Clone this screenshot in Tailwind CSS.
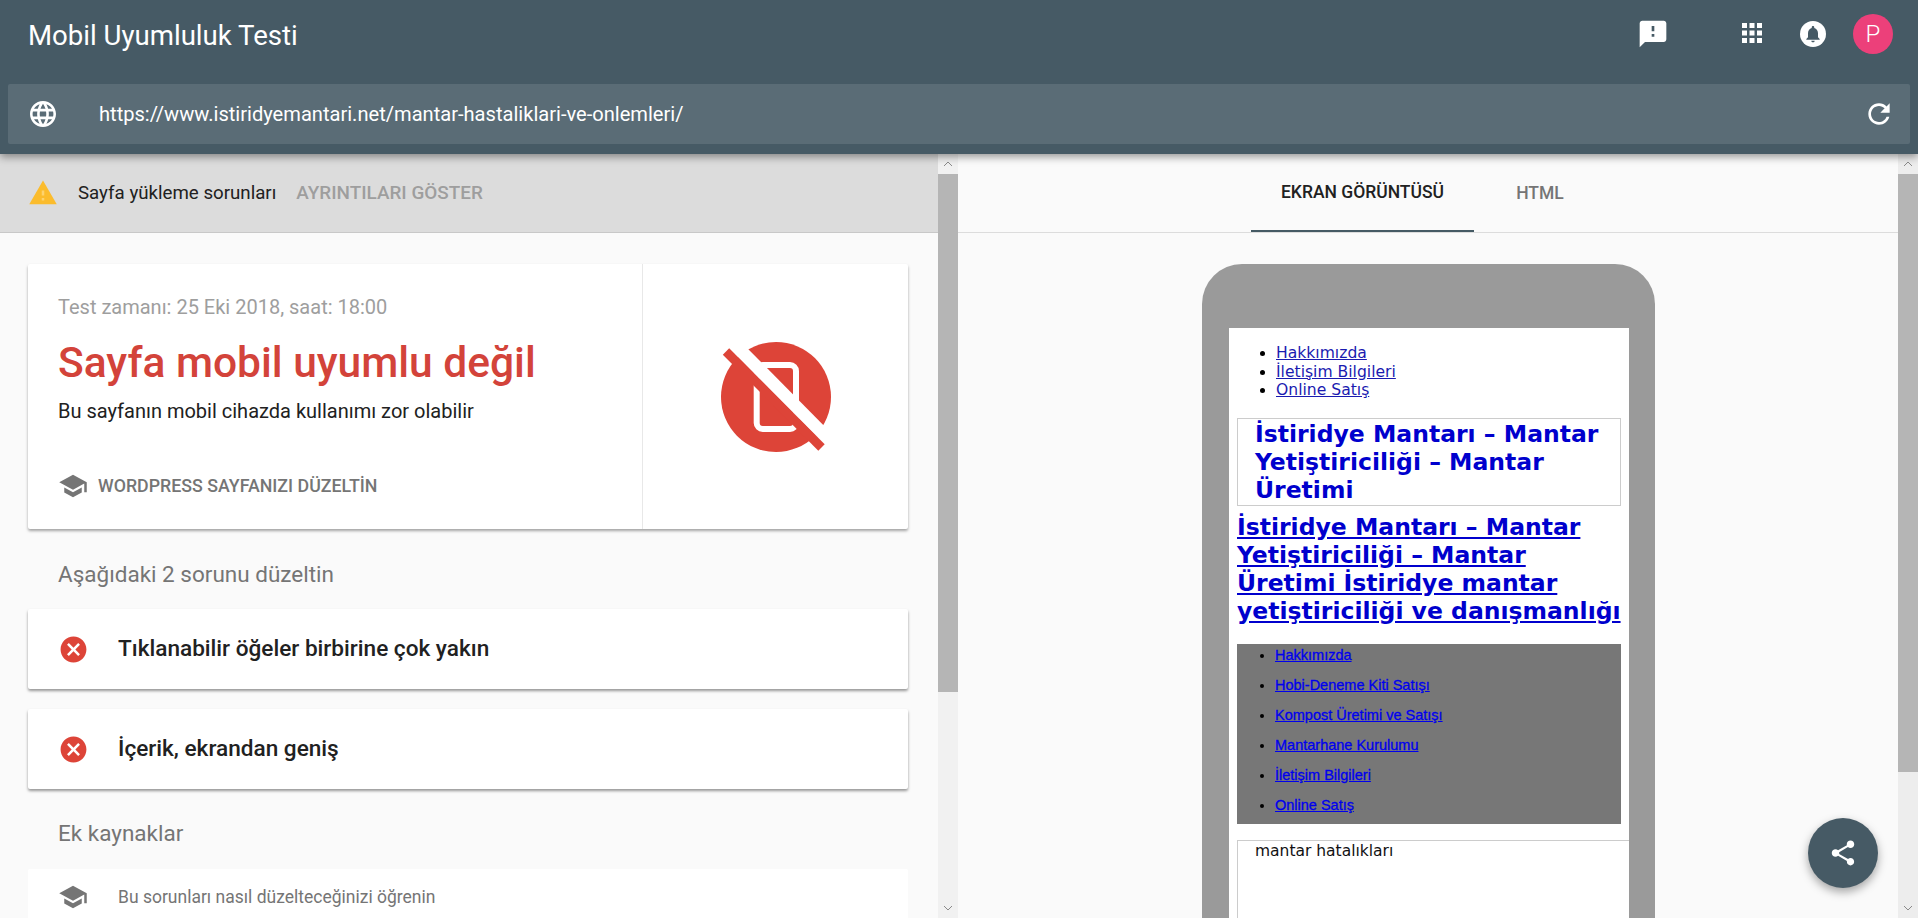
<!DOCTYPE html>
<html lang="tr">
<head>
<meta charset="utf-8">
<title>Mobil Uyumluluk Testi</title>
<script src="https://cdn.jsdelivr.net/npm/@tailwindcss/browser@4"></script>
</head>
<body class="overflow-hidden">
<div class="relative flex h-[918px] w-[1918px] flex-col overflow-hidden bg-[#fafafa] font-['Roboto',sans-serif]">
  <header class="relative z-10 flex h-[154px] shrink-0 flex-col bg-[#465a65] text-white shadow-[0_3px_8px_rgba(0,0,0,0.4)]">
    <div class="flex h-[84px] items-start pl-7 pr-[25px]">
      <h1 class="mt-[16px] flex-1 text-[27.6px] leading-[40px] font-normal">Mobil Uyumluluk Testi</h1>
      <svg class="mt-[18px] -ml-[1px] h-[32px] w-[32px]" viewBox="0 0 24 24" fill="#fff"><path d="M20 2H4c-1.1 0-1.99.9-1.99 2L2 22l4-4h14c1.1 0 2-.9 2-2V4c0-1.1-.9-2-2-2zm-7 12h-2v-2h2v2zm0-4h-2V6h2v4z"/></svg>
      <svg class="mt-[18px] ml-[68px] h-[30px] w-[30px]" viewBox="0 0 24 24" fill="#fff"><path d="M4 8h4V4H4v4zm6 12h4v-4h-4v4zm-6 0h4v-4H4v4zm0-6h4v-4H4v4zm6 0h4v-4h-4v4zm6-10v4h4V4h-4zm-6 4h4V4h-4v4zm6 6h4v-4h-4v4zm0 6h4v-4h-4v4z"/></svg>
      <div class="mt-[21px] ml-[33px] flex h-[26px] w-[26px] items-center justify-center rounded-full bg-white">
        <svg class="h-[20px] w-[20px]" viewBox="0 0 24 24" fill="#465a65"><path d="M12 22c1.1 0 2-.9 2-2h-4c0 1.1.89 2 2 2zm6-6v-5c0-3.07-1.64-5.64-4.5-6.32V4c0-.83-.67-1.5-1.5-1.5s-1.5.67-1.5 1.5v.68C7.63 5.36 6 7.92 6 11v5l-2 2v1h16v-1l-2-2z"/></svg>
      </div>
      <div class="mt-[14px] ml-[27px] flex h-[40px] w-[40px] items-center justify-center rounded-full bg-[#ec407a] text-[24px] font-light">P</div>
    </div>
    <div class="mx-2 flex h-[60px] items-center rounded-[2px] bg-[#5a6c76] pr-[15px] pl-[22px]">
      <svg class="h-[26px] w-[26px] shrink-0" viewBox="2 2 20 20" fill="#fff"><path d="M11.99 2C6.47 2 2 6.48 2 12s4.47 10 9.99 10C17.52 22 22 17.52 22 12S17.52 2 11.99 2zm6.93 6h-2.95c-.32-1.25-.78-2.45-1.38-3.56 1.84.63 3.37 1.91 4.33 3.56zM12 4.04c.83 1.2 1.48 2.53 1.91 3.96h-3.82c.43-1.43 1.08-2.76 1.91-3.96zM4.26 14C4.1 13.36 4 12.69 4 12s.1-1.36.26-2h3.38c-.08.66-.14 1.32-.14 2 0 .68.06 1.34.14 2H4.26zm.82 2h2.95c.32 1.25.78 2.45 1.38 3.56-1.84-.63-3.37-1.9-4.33-3.56zm2.95-8H5.08c.96-1.66 2.49-2.93 4.33-3.56C8.81 5.55 8.35 6.75 8.03 8zM12 19.96c-.83-1.2-1.48-2.53-1.91-3.96h3.82c-.43 1.43-1.08 2.76-1.91 3.96zM14.34 14H9.66c-.09-.66-.16-1.32-.16-2 0-.68.07-1.35.16-2h4.68c.09.65.16 1.32.16 2 0 .68-.07 1.34-.16 2zm.25 5.56c.6-1.11 1.06-2.31 1.38-3.56h2.95c-.96 1.65-2.49 2.93-4.33 3.56zM16.36 14c.08-.66.14-1.32.14-2 0-.68-.06-1.34-.14-2h3.38c.16.64.26 1.31.26 2s-.1 1.36-.26 2h-3.38z"/></svg>
      <span class="ml-[43px] flex-1 text-[20.1px]">https://www.istiridyemantari.net/mantar-hastaliklari-ve-onlemleri/</span>
      <svg class="h-[32px] w-[32px]" viewBox="0 0 24 24" fill="#fff"><path d="M17.65 6.35C16.2 4.9 14.21 4 12 4c-4.42 0-7.99 3.58-7.99 8s3.57 8 7.99 8c3.73 0 6.84-2.55 7.73-6h-2.08c-.82 2.33-3.04 4-5.65 4-3.31 0-6-2.69-6-6s2.69-6 6-6c1.66 0 3.14.69 4.22 1.78L13 11h7V4l-2.35 2.35z"/></svg>
    </div>
  </header>

  <main class="flex min-h-0 flex-1">
    <section class="flex w-[958px] shrink-0">
      <div class="min-w-0 flex-1 overflow-hidden">
        <div class="flex h-[79px] items-center border-b border-[#c8c8c8] bg-[#dcdcdc] pl-[28px]">
          <svg class="h-[30px] w-[30px] shrink-0" viewBox="0 0 24 24"><path fill="#fbbc2d" d="M1 21h22L12 2 1 21z"/><path fill="#fdd36f" d="M11 14h2v-4h-2zM11 18h2v-2h-2z"/></svg>
          <span class="ml-[20px] text-[18.7px] text-[#212121]">Sayfa yükleme sorunları</span>
          <span class="ml-[20px] text-[18.9px] font-medium text-[#9e9e9e]">AYRINTILARI GÖSTER</span>
        </div>
        <div class="pt-[31px] pr-[30px] pl-[28px]">
          <article class="flex h-[265px] rounded-[2px] bg-white shadow-[0_2px_3px_rgba(0,0,0,0.35)]">
            <div class="flex w-[614px] flex-col pt-[30px] pl-[30px]">
              <p class="text-[20px] leading-[26px] text-[#9e9e9e]">Test zamanı: 25 Eki 2018, saat: 18:00</p>
              <h2 class="mt-[15px] text-[42.5px] leading-[56px] font-medium text-[#d3433a]">Sayfa mobil uyumlu değil</h2>
              <p class="mt-[6px] text-[20px] leading-[28px] text-[#212121]">Bu sayfanın mobil cihazda kullanımı zor olabilir</p>
              <div class="mt-[46px] flex items-center">
                <svg class="h-[30px] w-[30px] shrink-0" viewBox="0 0 24 24" fill="#757575"><path d="M5 13.18v4L12 21l7-3.82v-4L12 17l-7-3.82zM12 3L1 9l11 6 9-4.91V17h2V9L12 3z"/></svg>
                <span class="ml-[10px] text-[17.8px] font-medium text-[#757575]">WORDPRESS SAYFANIZI DÜZELTİN</span>
              </div>
            </div>
            <div class="flex flex-1 items-center justify-center border-l border-[#e8e8e8]">
              <svg class="h-[120px] w-[120px]" viewBox="0 0 120 120">
                <circle cx="60" cy="60" r="55" fill="#dd4438"/>
                <rect x="40.7" y="28" width="39.3" height="64" rx="6" fill="none" stroke="#fff" stroke-width="6"/>
                <path d="M19 8 L112 102" stroke="#fff" stroke-width="13" fill="none"/>
                <path d="M10 14.5 L105.5 110.5" stroke="#dd4438" stroke-width="9" fill="none"/>
              </svg>
            </div>
          </article>
          <h3 class="mt-[30px] pl-[30px] text-[22.5px] leading-[30px] font-normal text-[#757575]">Aşağıdaki 2 sorunu düzeltin</h3>
          <div class="mt-[20px] flex h-[80px] items-center rounded-[2px] bg-white pl-[30px] shadow-[0_2px_3px_rgba(0,0,0,0.4)]">
            <svg class="h-[31px] w-[31px] shrink-0" viewBox="0 0 24 24" fill="#dd4438"><path d="M12 2C6.47 2 2 6.47 2 12s4.47 10 10 10 10-4.47 10-10S17.53 2 12 2zm5 13.59L15.59 17 12 13.41 8.41 17 7 15.59 10.59 12 7 8.41 8.41 7 12 10.59 15.59 7 17 8.41 13.41 12 17 15.59z"/></svg>
            <span class="ml-[29px] text-[22.6px] font-medium text-[#212121]">Tıklanabilir öğeler birbirine çok yakın</span>
          </div>
          <div class="mt-[20px] flex h-[80px] items-center rounded-[2px] bg-white pl-[30px] shadow-[0_2px_3px_rgba(0,0,0,0.4)]">
            <svg class="h-[31px] w-[31px] shrink-0" viewBox="0 0 24 24" fill="#dd4438"><path d="M12 2C6.47 2 2 6.47 2 12s4.47 10 10 10 10-4.47 10-10S17.53 2 12 2zm5 13.59L15.59 17 12 13.41 8.41 17 7 15.59 10.59 12 7 8.41 8.41 7 12 10.59 15.59 7 17 8.41 13.41 12 17 15.59z"/></svg>
            <span class="ml-[29px] text-[22.6px] font-medium text-[#212121]">İçerik, ekrandan geniş</span>
          </div>
          <h3 class="mt-[29px] pl-[30px] text-[22.5px] leading-[30px] font-normal text-[#757575]">Ek kaynaklar</h3>
          <div class="mt-[21px] flex h-[80px] items-start rounded-[2px] bg-white pt-[13px] pl-[30px]">
            <svg class="h-[30px] w-[30px] shrink-0" viewBox="0 0 24 24" fill="#757575"><path d="M5 13.18v4L12 21l7-3.82v-4L12 17l-7-3.82zM12 3L1 9l11 6 9-4.91V17h2V9L12 3z"/></svg>
            <span class="ml-[30px] text-[17.5px] leading-[30px] text-[#757575]">Bu sorunları nasıl düzelteceğinizi öğrenin</span>
          </div>
        </div>
      </div>
      <div class="flex w-5 shrink-0 flex-col bg-[#f1f1f1]">
        <div class="flex h-5 items-center justify-center"><svg class="h-[10px] w-[12px]" viewBox="0 0 12 10" fill="none" stroke="#8a8a8a"><path d="M2 7l4-4 4 4"/></svg></div>
        <div class="h-[518px] bg-[#b5b5b5]"></div>
        <div class="mt-auto flex h-5 items-center justify-center"><svg class="h-[10px] w-[12px]" viewBox="0 0 12 10" fill="none" stroke="#8a8a8a"><path d="M2 3l4 4 4-4"/></svg></div>
      </div>
    </section>

    <section class="flex min-w-0 flex-1">
      <div class="min-w-0 flex-1 overflow-hidden">
        <div class="flex h-[79px] items-stretch border-b border-[#dcdcdc] pl-[293px]">
          <div class="flex w-[223px] items-center justify-center border-b-2 border-[#455a64] text-[17.5px] font-medium text-[#212121]">EKRAN GÖRÜNTÜSÜ</div>
          <div class="ml-px flex w-[130px] items-center justify-center text-[17.5px] font-medium text-[#757575]">HTML</div>
        </div>
        <div class="pt-[31px] pl-[244px]">
          <div class="h-[700px] w-[453px] rounded-t-[40px] bg-[#9a9a9a] px-[27px] pt-[64px]">
            <div class="h-[640px] w-[400px] overflow-hidden bg-white px-2 font-['DejaVu_Sans',sans-serif]">
              <ul class="list-disc pt-[16px] pl-[39px] text-[15.6px] leading-[18.5px] text-[#1a1ab0] underline marker:text-black">
                <li>Hakkımızda</li>
                <li>İletişim Bilgileri</li>
                <li>Online Satış</li>
              </ul>
              <div class="mt-[18px] border border-[#cccccc] py-px pl-[17px] text-[23.5px] leading-[28px] font-bold whitespace-nowrap text-[#0000cd]">İstiridye Mantarı – Mantar<br>Yetiştiriciliği – Mantar<br>Üretimi</div>
              <div class="mt-[7px] text-[23.5px] leading-[28px] font-bold whitespace-nowrap text-[#0000cd] underline">İstiridye Mantarı – Mantar<br>Yetiştiriciliği – Mantar<br>Üretimi İstiridye mantar<br>yetiştiriciliği ve danışmanlığı</div>
              <ul class="mt-[19px] flex h-[180px] list-disc flex-col bg-[#777777] pl-[38px] font-['Liberation_Sans',sans-serif] text-[14.5px] leading-[30px] text-[#0000ee] underline marker:text-black [-webkit-text-stroke:0.3px_#0000ee]">
                <li class="-mt-[4px]">Hakkımızda</li>
                <li>Hobi-Deneme Kiti Satışı</li>
                <li>Kompost Üretimi ve Satışı</li>
                <li>Mantarhane Kurulumu</li>
                <li>İletişim Bilgileri</li>
                <li>Online Satış</li>
              </ul>
              <div class="mt-[16px] -mr-2 h-[120px] border border-r-0 border-[#cccccc] pl-[17px] text-[15.5px] leading-[20px] text-[#111]">mantar hatalıkları</div>
            </div>
          </div>
        </div>
      </div>
      <div class="flex w-5 shrink-0 flex-col bg-[#ededed]">
        <div class="flex h-5 items-center justify-center"><svg class="h-[10px] w-[12px]" viewBox="0 0 12 10" fill="none" stroke="#8a8a8a"><path d="M2 7l4-4 4 4"/></svg></div>
        <div class="h-[598px] bg-[#b5b5b5]"></div>
        <div class="mt-auto flex h-5 items-center justify-center"><svg class="h-[10px] w-[12px]" viewBox="0 0 12 10" fill="none" stroke="#8a8a8a"><path d="M2 3l4 4 4-4"/></svg></div>
      </div>
    </section>
  </main>

  <button class="absolute top-[818px] left-[1808px] flex h-[70px] w-[70px] items-center justify-center rounded-full bg-[#465a65] shadow-[0_4px_10px_rgba(0,0,0,0.35)]">
    <svg class="h-[30px] w-[30px]" viewBox="0 0 24 24" fill="#fff"><path d="M18 16.08c-.76 0-1.44.3-1.96.77L8.91 12.7c.05-.23.09-.46.09-.7s-.04-.47-.09-.7l7.05-4.11c.54.5 1.25.81 2.04.81 1.66 0 3-1.34 3-3s-1.34-3-3-3-3 1.34-3 3c0 .24.04.47.09.7L8.04 9.81C7.5 9.31 6.79 9 6 9c-1.66 0-3 1.34-3 3s1.34 3 3 3c.79 0 1.5-.31 2.04-.81l7.12 4.16c-.05.21-.08.43-.08.65 0 1.61 1.31 2.92 2.92 2.92s2.92-1.31 2.92-2.92-1.31-2.92-2.92-2.92z"/></svg>
  </button>
</div>
</body>
</html>
